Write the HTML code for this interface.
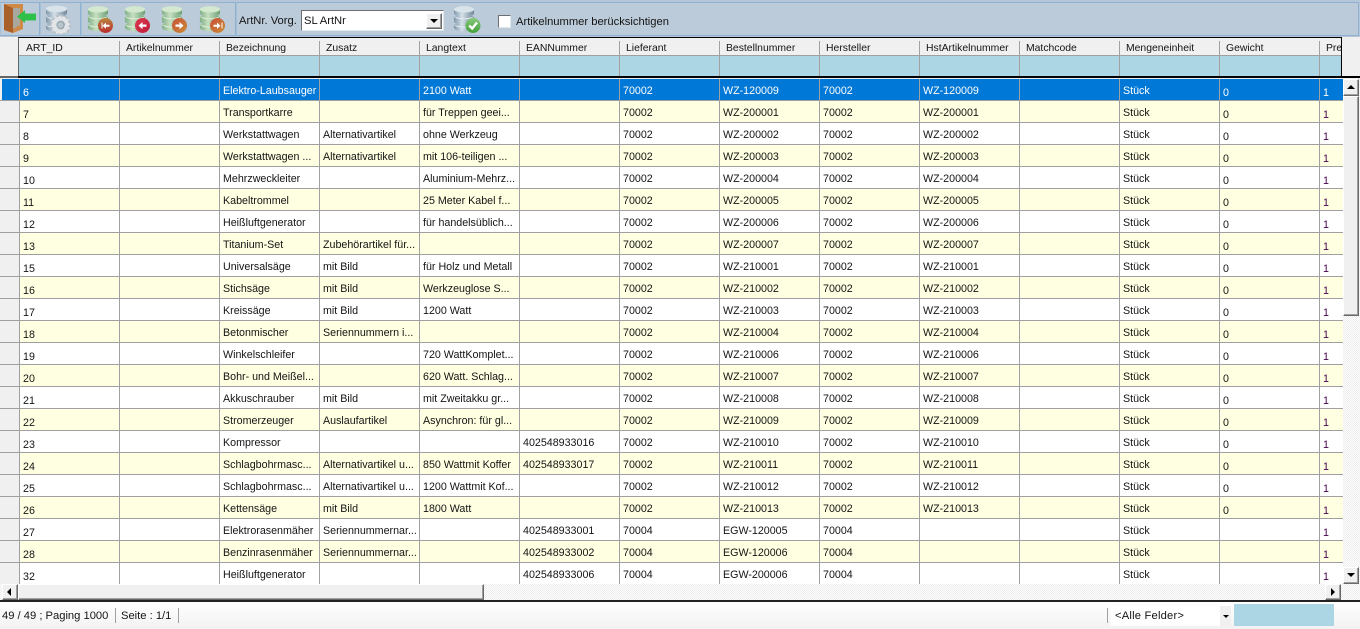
<!DOCTYPE html>
<html><head><meta charset="utf-8"><style>
*{box-sizing:border-box}
html,body{margin:0;padding:0;width:1360px;height:629px;overflow:hidden;background:#f0f0f0;font-family:"Liberation Sans",sans-serif;font-size:10.7px;color:#141414}
.a{position:absolute}
.seg{position:absolute;top:2px;height:34px;background:#bccbd9;border:1px solid #8fb0cf;border-left-color:#a3c0da}
table{border-collapse:separate;border-spacing:0;table-layout:fixed;width:1420px}
td{width:100px;height:22px;padding:2px 0 0 3px;white-space:nowrap;overflow:hidden;border-right:1px solid #a0a0a0;border-bottom:1px solid #a0a0a0;vertical-align:middle;line-height:12px}
td.h{width:20px;background:#f0f0f0;padding:0;box-shadow:inset 2px 0 #f0f0f0}
td.n{padding-top:7px;padding-left:3px}
td.p{color:#4a0050;padding-top:7px;padding-left:3px}
tr.y td{background:#ffffe1}
tr.y td.h{background:#f0f0f0}
tr.s td{background:#0078d7;color:#fff}
tr.s td.h{background:#0078d7;box-shadow:inset 2px 0 #f0f0f0}
.hc{position:absolute;top:4px;height:14px;line-height:13px;white-space:nowrap;font-size:10.4px}
.sep{position:absolute;width:1px;background:#a0a0a0}
.btn{position:absolute;background:#f0f0f0;border:1px solid;border-color:#fff #696969 #696969 #fff;box-shadow:inset -1px -1px #a0a0a0}
.chk{background:conic-gradient(#fff 25%,#ececec 0 50%,#fff 0 75%,#ececec 0) 0 0/2px 2px}
.tri{position:absolute;width:0;height:0}
</style></head><body>
<svg width="0" height="0" style="position:absolute"><defs>
<linearGradient id="g1" x1="0" x2="1" y1="0" y2="0"><stop offset="0" stop-color="#7fae85"/><stop offset=".4" stop-color="#c6e0c0"/><stop offset="1" stop-color="#6c9f76"/></linearGradient>
<linearGradient id="g2" x1="0" x2="1" y1="0" y2="0"><stop offset="0" stop-color="#7d97aa"/><stop offset=".4" stop-color="#d4e0e8"/><stop offset="1" stop-color="#6f8799"/></linearGradient>
<linearGradient id="r1" x1="0" x2="0" y1="0" y2="1"><stop offset="0" stop-color="#b9863f"/><stop offset="1" stop-color="#bb2a2c"/></linearGradient>
<linearGradient id="r2" x1="0" x2="1" y1="0" y2="1"><stop offset="0" stop-color="#dd3a50"/><stop offset="1" stop-color="#bd1a38"/></linearGradient>
<linearGradient id="r3" x1="0" x2="1" y1="0" y2="1"><stop offset="0" stop-color="#c9503a"/><stop offset="1" stop-color="#c98d35"/></linearGradient>
<linearGradient id="gc" x1="0" x2="0" y1="0" y2="1"><stop offset="0" stop-color="#86c97a"/><stop offset="1" stop-color="#43a13a"/></linearGradient>
<symbol id="dbg" viewBox="0 0 24 28"><path fill="url(#g1)" d="M1 20h22v4a11 4 0 0 1-22 0z"/><path fill="#e2efdd" d="M1 20a11 4 0 0 0 22 0v-1a11 4 0 0 1-22 0z"/><path fill="url(#g1)" d="M1 11h22v6a11 4 0 0 1-22 0z"/><path fill="#e2efdd" d="M1 11a11 4 0 0 0 22 0v-1a11 4 0 0 1-22 0z"/><path fill="url(#g1)" d="M1 4h22v4a11 4 0 0 1-22 0z"/><ellipse cx="12" cy="4" rx="11" ry="3.500" fill="#d3e8ce"/></symbol>
<symbol id="dbb" viewBox="0 0 24 28"><path fill="url(#g2)" d="M1 20h22v4a11 4 0 0 1-22 0z"/><path fill="#e6edf1" d="M1 20a11 4 0 0 0 22 0v-1a11 4 0 0 1-22 0z"/><path fill="url(#g2)" d="M1 11h22v6a11 4 0 0 1-22 0z"/><path fill="#e6edf1" d="M1 11a11 4 0 0 0 22 0v-1a11 4 0 0 1-22 0z"/><path fill="url(#g2)" d="M1 4h22v4a11 4 0 0 1-22 0z"/><ellipse cx="12" cy="4" rx="11" ry="3.500" fill="#d9e4ea"/></symbol>
</defs></svg>

<!-- toolbar -->
<div class="a" style="left:0;top:0;width:1360px;height:37px;background:#b4c6d8"></div>
<div class="seg" style="left:0;width:40px"></div>
<div class="seg" style="left:40px;width:41px"></div>
<div class="seg" style="left:81px;width:155px"></div>
<div class="seg" style="left:236px;width:1123px"></div>

<svg class="a" style="left:3px;top:3px" width="33" height="31" viewBox="0 0 33 31">
<path fill="#d08a48" d="M1 1h19v25l-10 4-9-3z"/><path fill="#aaa79f" d="M10 5h7v17l-7 4z"/><path fill="#a9602a" d="M1 1l9 4v25l-9-3z"/>
<path fill="#2fc04a" d="M14 13.500l8-6.500v3.500h11v7H22V20z"/></svg>

<svg class="a" style="left:45px;top:5px" width="31" height="29" viewBox="0 0 31 29"><use href="#dbb" width="23" height="27"/>
<circle cx="15.500" cy="20" r="7" fill="none" stroke="#e2e5e7" stroke-width="5"/><circle cx="15.500" cy="20" r="9.500" fill="none" stroke="#b8bfc4" stroke-width="2" stroke-dasharray="2.600 2.400"/><circle cx="15.500" cy="20" r="3.400" fill="#b9c5cd" stroke="#9aa5ab"/></svg>

<svg class="a" style="left:87px;top:5px" width="27" height="29" viewBox="0 0 27 29"><use href="#dbg" width="22" height="27"/><circle cx="18.500" cy="20.500" r="7.500" fill="url(#r1)"/><path fill="#fff" d="M19 17.500v2.200h3.500v2H19v2.200l-3.500-3.200zM14.500 17.500h1v6h-1z"/></svg>
<svg class="a" style="left:124px;top:5px" width="27" height="29" viewBox="0 0 27 29"><use href="#dbg" width="22" height="27"/><circle cx="18.500" cy="20.500" r="7.500" fill="url(#r2)"/><path fill="#fff" d="M18.500 17v2.500h4v2.200h-4v2.500l-4-3.600z"/></svg>
<svg class="a" style="left:161px;top:5px" width="27" height="29" viewBox="0 0 27 29"><use href="#dbg" width="22" height="27"/><circle cx="18.500" cy="20.500" r="7.500" fill="url(#r3)"/><path fill="#fff" d="M18.500 17v2.500h-4v2.200h4v2.500l4-3.600z"/></svg>
<svg class="a" style="left:199px;top:5px" width="27" height="29" viewBox="0 0 27 29"><use href="#dbg" width="22" height="27"/><circle cx="18.500" cy="20.500" r="7.500" fill="url(#r3)"/><path fill="#fff" d="M18 17.500v2.200h-3.500v2H18v2.200l3.500-3.200zM22.500 17.500h1v6h-1z"/></svg>

<div class="a" style="left:239px;top:15px;font-size:11.2px;line-height:13px;white-space:nowrap">ArtNr. Vorg.</div>
<div class="a" style="left:301px;top:10px;width:143px;height:21px;background:#fff;border:1px solid #dfe6ec;border-top-color:#6e6e6e;border-left-color:#6e6e6e"></div>
<div class="a" style="left:304px;top:15px;font-size:11.2px;line-height:13px">SL ArtNr</div>
<div class="btn" style="left:426px;top:13px;width:16px;height:16px"></div>
<div class="tri" style="left:430px;top:19px;border:4px solid transparent;border-top:4px solid #000;border-bottom:0"></div>

<svg class="a" style="left:453px;top:5px" width="29" height="29" viewBox="0 0 29 29"><use href="#dbb" width="22" height="27"/><circle cx="20" cy="20.500" r="7.500" fill="url(#gc)"/><path fill="none" stroke="#fff" stroke-width="2.400" d="M16.200 20.500l3 3 4.800-6"/></svg>

<div class="a" style="left:498px;top:15px;width:13px;height:13px;background:#fff;border:1px solid #6e6e6e;border-right-color:#dfe6ec;border-bottom-color:#dfe6ec"></div>
<div class="a" style="left:516px;top:16px;font-size:11.2px;line-height:13px;white-space:nowrap">Artikelnummer berücksichtigen</div>

<!-- header -->
<div class="a" style="left:0;top:37px;width:1360px;height:42px;background:#f0f0f0"></div>
<div class="a" style="left:18px;top:37px;width:1324px;height:41px;background:#f0f0f0;border-top:1px solid #000;border-left:1px solid #666;border-right:1px solid #000;overflow:hidden">
<div class="a" style="left:0;top:17px;width:1400px;height:21px;background:#add6e4;border-top:1px solid #a0a0a0"></div>
<div class="hc" style="left:7px">ART_ID</div><div class="hc" style="left:107px">Artikelnummer</div><div class="hc" style="left:207px">Bezeichnung</div><div class="hc" style="left:307px">Zusatz</div><div class="hc" style="left:407px">Langtext</div><div class="hc" style="left:507px">EANNummer</div><div class="hc" style="left:607px">Lieferant</div><div class="hc" style="left:707px">Bestellnummer</div><div class="hc" style="left:807px">Hersteller</div><div class="hc" style="left:907px">HstArtikelnummer</div><div class="hc" style="left:1007px">Matchcode</div><div class="hc" style="left:1107px">Mengeneinheit</div><div class="hc" style="left:1207px">Gewicht</div><div class="hc" style="left:1307px">Preis</div>
<div class="sep" style="left:100px;top:3px;height:35px"></div><div class="sep" style="left:200px;top:3px;height:35px"></div><div class="sep" style="left:300px;top:3px;height:35px"></div><div class="sep" style="left:400px;top:3px;height:35px"></div><div class="sep" style="left:500px;top:3px;height:35px"></div><div class="sep" style="left:600px;top:3px;height:35px"></div><div class="sep" style="left:700px;top:3px;height:35px"></div><div class="sep" style="left:800px;top:3px;height:35px"></div><div class="sep" style="left:900px;top:3px;height:35px"></div><div class="sep" style="left:1000px;top:3px;height:35px"></div><div class="sep" style="left:1100px;top:3px;height:35px"></div><div class="sep" style="left:1200px;top:3px;height:35px"></div><div class="sep" style="left:1300px;top:3px;height:35px"></div>
</div>
<div class="a" style="left:0;top:76px;width:1360px;height:2px;background:#000"></div>
<div class="a" style="left:0;top:76px;width:18px;height:2px;background:#666"></div>

<!-- grid -->
<div class="a" style="left:0;top:79px;width:1343px;height:505px;overflow:hidden;background:#fff">
<table>
<tr class="s"><td class="h"></td><td class="n">6</td><td></td><td>Elektro-Laubsauger</td><td></td><td>2100 Watt</td><td></td><td>70002</td><td>WZ-120009</td><td>70002</td><td>WZ-120009</td><td></td><td>Stück</td><td class="n">0</td><td class="n">1</td></tr>
<tr class="y"><td class="h"></td><td class="n">7</td><td></td><td>Transportkarre</td><td></td><td>für Treppen geei...</td><td></td><td>70002</td><td>WZ-200001</td><td>70002</td><td>WZ-200001</td><td></td><td>Stück</td><td class="n">0</td><td class="p">1</td></tr>
<tr><td class="h"></td><td class="n">8</td><td></td><td>Werkstattwagen</td><td>Alternativartikel</td><td>ohne Werkzeug</td><td></td><td>70002</td><td>WZ-200002</td><td>70002</td><td>WZ-200002</td><td></td><td>Stück</td><td class="n">0</td><td class="p">1</td></tr>
<tr class="y"><td class="h"></td><td class="n">9</td><td></td><td>Werkstattwagen ...</td><td>Alternativartikel</td><td>mit 106-teiligen ...</td><td></td><td>70002</td><td>WZ-200003</td><td>70002</td><td>WZ-200003</td><td></td><td>Stück</td><td class="n">0</td><td class="p">1</td></tr>
<tr><td class="h"></td><td class="n">10</td><td></td><td>Mehrzweckleiter</td><td></td><td>Aluminium-Mehrz...</td><td></td><td>70002</td><td>WZ-200004</td><td>70002</td><td>WZ-200004</td><td></td><td>Stück</td><td class="n">0</td><td class="p">1</td></tr>
<tr class="y"><td class="h"></td><td class="n">11</td><td></td><td>Kabeltrommel</td><td></td><td>25 Meter Kabel f...</td><td></td><td>70002</td><td>WZ-200005</td><td>70002</td><td>WZ-200005</td><td></td><td>Stück</td><td class="n">0</td><td class="p">1</td></tr>
<tr><td class="h"></td><td class="n">12</td><td></td><td>Heißluftgenerator</td><td></td><td>für handelsüblich...</td><td></td><td>70002</td><td>WZ-200006</td><td>70002</td><td>WZ-200006</td><td></td><td>Stück</td><td class="n">0</td><td class="p">1</td></tr>
<tr class="y"><td class="h"></td><td class="n">13</td><td></td><td>Titanium-Set</td><td>Zubehörartikel für...</td><td></td><td></td><td>70002</td><td>WZ-200007</td><td>70002</td><td>WZ-200007</td><td></td><td>Stück</td><td class="n">0</td><td class="p">1</td></tr>
<tr><td class="h"></td><td class="n">15</td><td></td><td>Universalsäge</td><td>mit Bild</td><td>für Holz und Metall</td><td></td><td>70002</td><td>WZ-210001</td><td>70002</td><td>WZ-210001</td><td></td><td>Stück</td><td class="n">0</td><td class="p">1</td></tr>
<tr class="y"><td class="h"></td><td class="n">16</td><td></td><td>Stichsäge</td><td>mit Bild</td><td>Werkzeuglose S...</td><td></td><td>70002</td><td>WZ-210002</td><td>70002</td><td>WZ-210002</td><td></td><td>Stück</td><td class="n">0</td><td class="p">1</td></tr>
<tr><td class="h"></td><td class="n">17</td><td></td><td>Kreissäge</td><td>mit Bild</td><td>1200 Watt</td><td></td><td>70002</td><td>WZ-210003</td><td>70002</td><td>WZ-210003</td><td></td><td>Stück</td><td class="n">0</td><td class="p">1</td></tr>
<tr class="y"><td class="h"></td><td class="n">18</td><td></td><td>Betonmischer</td><td>Seriennummern i...</td><td></td><td></td><td>70002</td><td>WZ-210004</td><td>70002</td><td>WZ-210004</td><td></td><td>Stück</td><td class="n">0</td><td class="p">1</td></tr>
<tr><td class="h"></td><td class="n">19</td><td></td><td>Winkelschleifer</td><td></td><td>720 WattKomplet...</td><td></td><td>70002</td><td>WZ-210006</td><td>70002</td><td>WZ-210006</td><td></td><td>Stück</td><td class="n">0</td><td class="p">1</td></tr>
<tr class="y"><td class="h"></td><td class="n">20</td><td></td><td>Bohr- und Meißel...</td><td></td><td>620 Watt. Schlag...</td><td></td><td>70002</td><td>WZ-210007</td><td>70002</td><td>WZ-210007</td><td></td><td>Stück</td><td class="n">0</td><td class="p">1</td></tr>
<tr><td class="h"></td><td class="n">21</td><td></td><td>Akkuschrauber</td><td>mit Bild</td><td>mit Zweitakku gr...</td><td></td><td>70002</td><td>WZ-210008</td><td>70002</td><td>WZ-210008</td><td></td><td>Stück</td><td class="n">0</td><td class="p">1</td></tr>
<tr class="y"><td class="h"></td><td class="n">22</td><td></td><td>Stromerzeuger</td><td>Auslaufartikel</td><td>Asynchron: für gl...</td><td></td><td>70002</td><td>WZ-210009</td><td>70002</td><td>WZ-210009</td><td></td><td>Stück</td><td class="n">0</td><td class="p">1</td></tr>
<tr><td class="h"></td><td class="n">23</td><td></td><td>Kompressor</td><td></td><td></td><td>402548933016</td><td>70002</td><td>WZ-210010</td><td>70002</td><td>WZ-210010</td><td></td><td>Stück</td><td class="n">0</td><td class="p">1</td></tr>
<tr class="y"><td class="h"></td><td class="n">24</td><td></td><td>Schlagbohrmasc...</td><td>Alternativartikel u...</td><td>850 Wattmit Koffer</td><td>402548933017</td><td>70002</td><td>WZ-210011</td><td>70002</td><td>WZ-210011</td><td></td><td>Stück</td><td class="n">0</td><td class="p">1</td></tr>
<tr><td class="h"></td><td class="n">25</td><td></td><td>Schlagbohrmasc...</td><td>Alternativartikel u...</td><td>1200 Wattmit Kof...</td><td></td><td>70002</td><td>WZ-210012</td><td>70002</td><td>WZ-210012</td><td></td><td>Stück</td><td class="n">0</td><td class="p">1</td></tr>
<tr class="y"><td class="h"></td><td class="n">26</td><td></td><td>Kettensäge</td><td>mit Bild</td><td>1800 Watt</td><td></td><td>70002</td><td>WZ-210013</td><td>70002</td><td>WZ-210013</td><td></td><td>Stück</td><td class="n">0</td><td class="p">1</td></tr>
<tr><td class="h"></td><td class="n">27</td><td></td><td>Elektrorasenmäher</td><td>Seriennummernar...</td><td></td><td>402548933001</td><td>70004</td><td>EGW-120005</td><td>70004</td><td></td><td></td><td>Stück</td><td></td><td class="p">1</td></tr>
<tr class="y"><td class="h"></td><td class="n">28</td><td></td><td>Benzinrasenmäher</td><td>Seriennummernar...</td><td></td><td>402548933002</td><td>70004</td><td>EGW-120006</td><td>70004</td><td></td><td></td><td>Stück</td><td></td><td class="p">1</td></tr>
<tr><td class="h"></td><td class="n">32</td><td></td><td>Heißluftgenerator</td><td></td><td></td><td>402548933006</td><td>70004</td><td>EGW-200006</td><td>70004</td><td></td><td></td><td>Stück</td><td></td><td class="p">1</td></tr>
</table>
</div>

<!-- vertical scrollbar -->
<div class="a chk" style="left:1343px;top:79px;width:17px;height:505px"></div>
<div class="btn" style="left:1343px;top:79px;width:16px;height:17px"></div>
<div class="tri" style="left:1347px;top:85px;border:4px solid transparent;border-bottom:4px solid #000;border-top:0"></div>
<div class="btn" style="left:1343px;top:96px;width:16px;height:220px"></div>
<div class="btn" style="left:1343px;top:567px;width:16px;height:17px"></div>
<div class="tri" style="left:1347px;top:573px;border:4px solid transparent;border-top:4px solid #000;border-bottom:0"></div>

<!-- horizontal scrollbar -->
<div class="a chk" style="left:0;top:584px;width:1360px;height:16px"></div>
<div class="btn" style="left:2px;top:584px;width:16px;height:16px"></div>
<div class="tri" style="left:7px;top:588px;border:4px solid transparent;border-right:4px solid #000;border-left:0"></div>
<div class="btn" style="left:18px;top:584px;width:466px;height:16px"></div>
<div class="btn" style="left:1325px;top:584px;width:16px;height:16px"></div>
<div class="tri" style="left:1331px;top:588px;border:4px solid transparent;border-left:4px solid #000;border-right:0"></div>

<!-- status bar -->
<div class="a" style="left:0;top:600px;width:1360px;height:2px;background:#222"></div>
<div class="a" style="left:0;top:602px;width:1360px;height:27px;background:linear-gradient(#fff,#f2f2f2)"></div>
<div class="a" style="left:2px;top:610px;line-height:13px;white-space:nowrap;font-size:11.2px">49 / 49 ; Paging 1000</div>
<div class="a" style="left:121px;top:610px;line-height:13px;white-space:nowrap;font-size:11.2px">Seite : 1/1</div>
<div class="sep" style="left:115px;top:608px;height:15px"></div>
<div class="sep" style="left:178px;top:608px;height:15px"></div>
<div class="sep" style="left:1107px;top:608px;height:15px"></div>
<div class="a" style="left:1111px;top:606px;width:120px;height:20px;background:#fff"></div>
<div class="a" style="left:1115px;top:610px;line-height:13px;white-space:nowrap;font-size:11.2px;letter-spacing:.2px">&lt;Alle Felder&gt;</div>
<div class="a" style="left:1220px;top:606px;width:11px;height:20px;background:#f0f0f0"></div>
<div class="tri" style="left:1223px;top:615px;border:3px solid transparent;border-top:3px solid #000;border-bottom:0"></div>
<div class="a" style="left:1234px;top:604px;width:100px;height:22px;background:#add6e4"></div>
</body></html>
